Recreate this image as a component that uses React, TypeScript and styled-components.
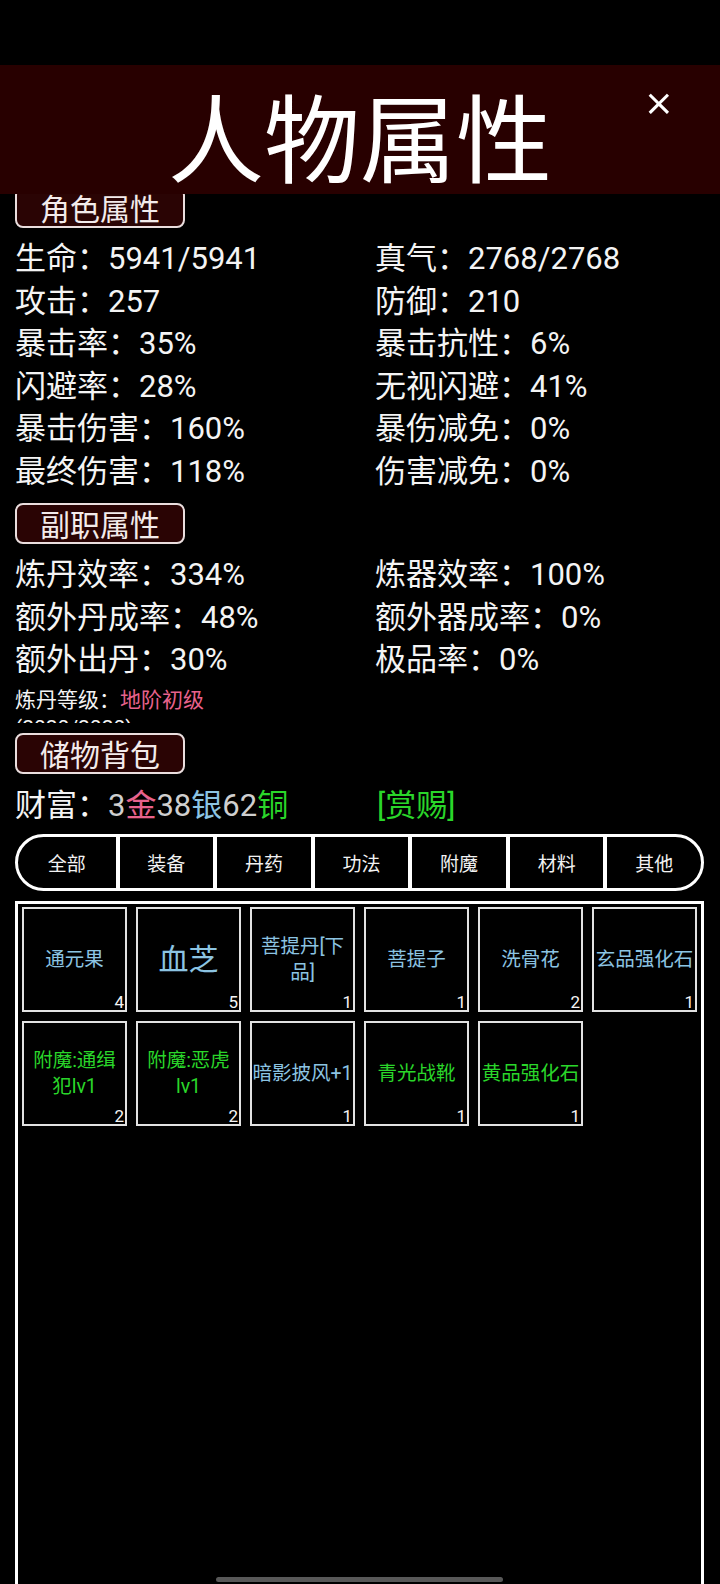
import styled, { createGlobalStyle } from 'styled-components'

const GlobalStyle = createGlobalStyle`
    html, body {
        margin: 0;
        padding: 0;
        background: #000;
        overflow: hidden;
    }
    body {
        font-family: Roboto, "Noto Sans CJK SC", sans-serif;
        color: #f4f4f4;
    }
`

const BLUE = '#8cc4e2'
const GREEN = '#2ad62a'
const PINK = '#e8628c'
const GREY = '#cfcfcf'

const mainStats = [
    ['生命：5941/5941', '真气：2768/2768'],
    ['攻击：257', '防御：210'],
    ['暴击率：35%', '暴击抗性：6%'],
    ['闪避率：28%', '无视闪避：41%'],
    ['暴击伤害：160%', '暴伤减免：0%'],
    ['最终伤害：118%', '伤害减免：0%'],
]

const jobStats = [
    ['炼丹效率：334%', '炼器效率：100%'],
    ['额外丹成率：48%', '额外器成率：0%'],
    ['额外出丹：30%', '极品率：0%'],
]

const tabs = ['全部', '装备', '丹药', '功法', '附魔', '材料', '其他']

type Item = { name: string; count: number; color: string; big?: boolean }

const items: Item[] = [
    { name: '通元果', count: 4, color: BLUE },
    { name: '血芝', count: 5, color: BLUE, big: true },
    { name: '菩提丹[下品]', count: 1, color: BLUE },
    { name: '菩提子', count: 1, color: BLUE },
    { name: '洗骨花', count: 2, color: BLUE },
    { name: '玄品强化石', count: 1, color: BLUE },
    { name: '附魔:通缉犯lv1', count: 2, color: GREEN },
    { name: '附魔:恶虎lv1', count: 2, color: GREEN },
    { name: '暗影披风+1', count: 1, color: BLUE },
    { name: '青光战靴', count: 1, color: GREEN },
    { name: '黄品强化石', count: 1, color: GREEN },
]

const App = () => {
    return (
        <>
            <GlobalStyle />
            <HeaderST>
                <TitleST>人物属性</TitleST>
                <CloseST>×</CloseST>
            </HeaderST>
            <PageST>
                <SectionLabelST>角色属性</SectionLabelST>
                <StatGridST>
                    {mainStats.map((row, index) => (
                        <StatRowST key={index}>
                            <span>{row[0]}</span>
                            <span>{row[1]}</span>
                        </StatRowST>
                    ))}
                </StatGridST>

                <SectionLabelST>副职属性</SectionLabelST>
                <StatGridST>
                    {jobStats.map((row, index) => (
                        <StatRowST key={index}>
                            <span>{row[0]}</span>
                            <span>{row[1]}</span>
                        </StatRowST>
                    ))}
                </StatGridST>
                <LevelST>
                    炼丹等级：<ColorST $color={PINK}>地阶初级</ColorST>
                    <br />
                    (2020/2020)
                </LevelST>

                <SectionLabelST>储物背包</SectionLabelST>
                <WealthRowST>
                    <span>
                        财富：<ColorST $color={GREY}>3</ColorST>
                        <ColorST $color={PINK}>金</ColorST>
                        <ColorST $color={GREY}>38</ColorST>
                        <ColorST $color={BLUE}>银</ColorST>
                        <ColorST $color={GREY}>62</ColorST>
                        <ColorST $color={GREEN}>铜</ColorST>
                    </span>
                    <ColorST $color={GREEN}>[赏赐]</ColorST>
                </WealthRowST>

                <TabBarST>
                    {tabs.map((tab) => (
                        <TabST key={tab}>{tab}</TabST>
                    ))}
                </TabBarST>

                <BagST>
                    {items.map((item, index) => (
                        <CellST key={index}>
                            <CellNameST $color={item.color} $big={item.big}>{item.name}</CellNameST>
                            <CountST>{item.count}</CountST>
                        </CellST>
                    ))}
                </BagST>
            </PageST>
            <HomeBarST />
        </>
    )
}

const HeaderST = styled.header`
    position: fixed;
    top: 65px;
    left: 0;
    right: 0;
    height: 129px;
    background: #280000;
    z-index: 2;
    display: flex;
    justify-content: center;
    align-items: center;
`

const TitleST = styled.h1`
    margin: 0;
    padding-top: 8px;
    font-size: 96px;
    font-weight: 400;
    line-height: 1;
    color: #fff;
    font-family: "Noto Sans CJK SC", sans-serif;
`

const CloseST = styled.div`
    position: absolute;
    top: 20px;
    right: 46px;
    font-size: 36px;
    line-height: 1;
    color: #fff;
    font-family: "DejaVu Sans", sans-serif;
`

const PageST = styled.main`
    padding: 187px 16px 0 15px;
`

const SectionLabelST = styled.div`
    box-sizing: border-box;
    width: 170px;
    height: 41px;
    border: 2px solid #eadede;
    border-radius: 8px;
    background: #2a0404;
    color: #f3ebeb;
    font-size: 30px;
    line-height: 36px;
    text-align: center;
    font-family: "Noto Sans CJK SC", sans-serif;
`

const StatGridST = styled.div`
    display: flex;
    flex-direction: column;
    margin: 10px 0;
`

const StatRowST = styled.div`
    display: grid;
    grid-template-columns: 360px 1fr;
    font-size: 31px;
    line-height: 42.5px;
    height: 42.5px;
    white-space: nowrap;
`

const LevelST = styled.div`
    margin-top: -10px;
    height: 41px;
    overflow: hidden;
    font-size: 21px;
    line-height: 28px;
    padding-top: 4px;
    box-sizing: border-box;
    margin-bottom: 10px;
`

const ColorST = styled.span<{ $color: string }>`
    color: ${({ $color }) => $color};
`

const WealthRowST = styled.div`
    display: grid;
    grid-template-columns: 362px 1fr;
    margin-top: 10px;
    font-size: 31px;
    line-height: 43px;
    white-space: nowrap;
`

const TabBarST = styled.div`
    box-sizing: border-box;
    margin-top: 7px;
    height: 57px;
    border: 3px solid #fff;
    border-radius: 29px;
    overflow: hidden;
    display: grid;
    grid-template-columns: repeat(7, 1fr);
`

const TabST = styled.div`
    display: flex;
    align-items: center;
    justify-content: center;
    font-size: 19px;
    color: #f2f2f2;
    border-left: 4px solid #fff;
    &:first-child {
        border-left: none;
    }
`

const BagST = styled.div`
    box-sizing: border-box;
    margin-top: 10px;
    height: 760px;
    border: 3px solid #fff;
    border-bottom: none;
    padding: 3px 4px;
    display: grid;
    grid-template-columns: repeat(6, 105px);
    grid-auto-rows: 105px;
    column-gap: 9px;
    row-gap: 9px;
    align-content: start;
`

const CellST = styled.div`
    position: relative;
    box-sizing: border-box;
    border: 2px solid #e2e2e2;
    display: flex;
    align-items: center;
    justify-content: center;
    text-align: center;
`

const CellNameST = styled.div<{ $color: string; $big?: boolean }>`
    color: ${({ $color }) => $color};
    font-size: ${({ $big }) => ($big ? '30px' : '19.5px')};
    line-height: 26px;
    margin-top: 2px;
`

const CountST = styled.span`
    position: absolute;
    right: 1px;
    bottom: -1px;
    font-size: 17px;
    line-height: 1;
    color: #f4f4f4;
`

const HomeBarST = styled.div`
    position: fixed;
    left: 216px;
    bottom: 2px;
    width: 287px;
    height: 5px;
    border-radius: 3px;
    background: #585858;
    z-index: 3;
`

export default App
